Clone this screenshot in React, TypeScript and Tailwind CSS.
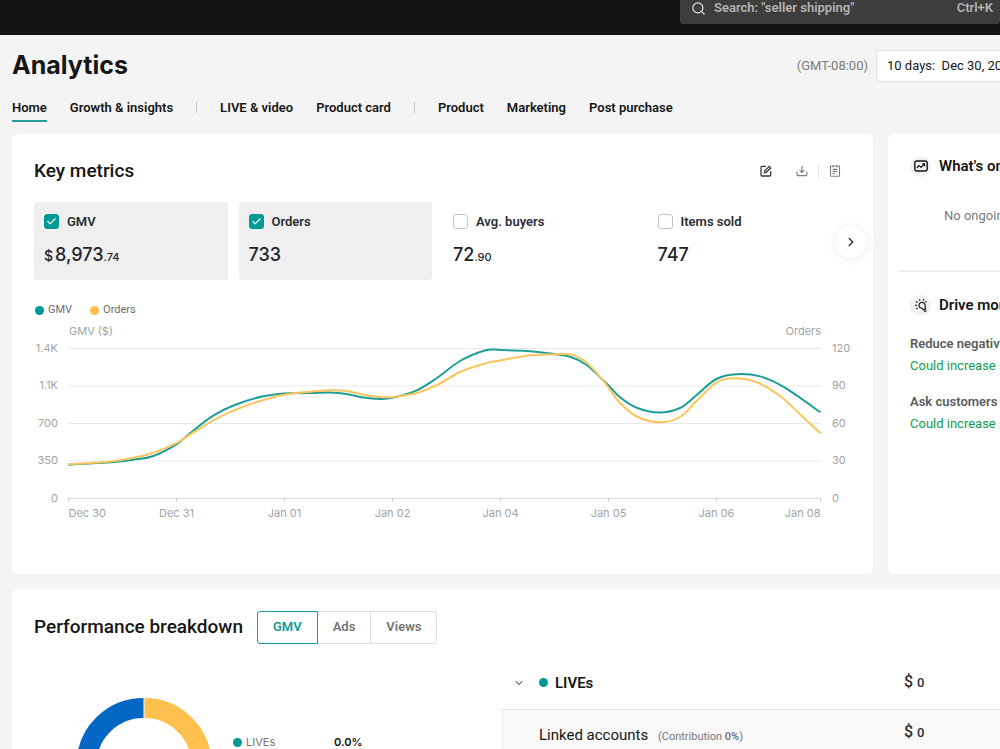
import { useState } from "react";
import { Check, ChevronDown, ChevronRight, Search } from "lucide-react";

type Point = [number, number];

const gmvPoints: Point[] = [
  [68.5, 464.7], [116.7, 461.7], [133.3, 459.7], [152.7, 456.3], [176, 444.7], [190, 433.3], [213.3, 415.7],
  [236.7, 404.3], [263.3, 396.3], [284.3, 393.5], [310, 393], [330, 392.5], [346.7, 393.9], [363.3, 397.5],
  [380, 398.9], [392.3, 397.9], [416.7, 390.3], [437, 378], [460, 361], [485.7, 350.2], [500, 350], [526.7, 350.9],
  [548, 353.3], [570, 356.7], [586.7, 365], [608.3, 385.3], [620, 397.3], [636.7, 407.7], [659, 412.5],
  [680, 408], [696.7, 395], [716.3, 379], [736.7, 374.2], [760, 376.4], [783.3, 386.7], [820.5, 412.3],
];

const orderPoints: Point[] = [
  [68.5, 464.3], [110, 461.4], [133.3, 457.7], [152.7, 453], [176, 443.3], [190, 434.7], [213.3, 420.3],
  [233.3, 410.7], [260, 401], [284.3, 394.7], [310, 391.7], [330, 390.3], [346.7, 390.9], [363.3, 394.7],
  [380, 397], [392.3, 397], [416.7, 393], [440, 383.5], [460, 372], [486.7, 363], [500, 360.5], [526.7, 355.7],
  [550, 354.5], [571, 354.5], [586.7, 362.7], [601.7, 378.7], [608.3, 387.5], [620, 403], [636.7, 416.5],
  [659, 422.3], [680, 417], [696.7, 400.8], [716.3, 382.6], [733.3, 378.3], [756.7, 382.2], [780, 396],
  [800, 414.3], [820.5, 433.3],
];

function smoothPath(points: Point[]) {
  let d = `M${points[0][0]} ${points[0][1]}`;
  for (let i = 0; i < points.length - 1; i++) {
    const p0 = points[Math.max(i - 1, 0)];
    const p1 = points[i];
    const p2 = points[i + 1];
    const p3 = points[Math.min(i + 2, points.length - 1)];
    d += ` C${p1[0] + (p2[0] - p0[0]) / 6} ${p1[1] + (p2[1] - p0[1]) / 6} ${p2[0] - (p3[0] - p1[0]) / 6} ${
      p2[1] - (p3[1] - p1[1]) / 6
    } ${p2[0]} ${p2[1]}`;
  }
  return d;
}

const gridRows = [
  { y: 348.5, left: "1.4K", right: "120" },
  { y: 386, left: "1.1K", right: "90" },
  { y: 423.5, left: "700", right: "60" },
  { y: 461, left: "350", right: "30" },
  { y: 498.5, left: "0", right: "0" },
];

const ticks = [
  { x: 68.5, label: "Dec 30", anchor: "start" },
  { x: 176.5, label: "Dec 31", anchor: "middle" },
  { x: 284.5, label: "Jan 01", anchor: "middle" },
  { x: 392.5, label: "Jan 02", anchor: "middle" },
  { x: 500.5, label: "Jan 04", anchor: "middle" },
  { x: 608.5, label: "Jan 05", anchor: "middle" },
  { x: 716.5, label: "Jan 06", anchor: "middle" },
  { x: 820.5, label: "Jan 08", anchor: "end" },
] as const;

function TrendChart() {
  return (
    <svg viewBox="34 320 817 206" className="block w-full" role="img" aria-label="GMV and orders by day">
      <g fontSize="11" fill="#a3a3a3">
        <text x="69" y="335">GMV ($)</text>
        <text x="821" y="335" textAnchor="end">Orders</text>
        {gridRows.map((row) => (
          <g key={row.y}>
            <line x1="68" x2="821" y1={row.y} y2={row.y} stroke={row.left === "0" ? "#dcdcdc" : "#e9e9e9"} />
            <text x="58" y={row.y + 3} textAnchor="end">{row.left}</text>
            <text x="832" y={row.y + 3}>{row.right}</text>
          </g>
        ))}
        {ticks.map((tick) => (
          <g key={tick.label}>
            <line x1={tick.x} x2={tick.x} y1="498" y2="502" stroke="#cfcfcf" />
            <text x={tick.x} y="517" textAnchor={tick.anchor}>{tick.label}</text>
          </g>
        ))}
      </g>
      <path d={smoothPath(gmvPoints)} fill="none" stroke="#1f9d97" strokeWidth="2" strokeLinejoin="round" />
      <path d={smoothPath(orderPoints)} fill="none" stroke="#fbc55c" strokeWidth="2" strokeLinejoin="round" />
    </svg>
  );
}

function EditIcon() {
  return (
    <svg viewBox="0 0 12 12" className="size-3" fill="none" stroke="currentColor" strokeWidth="1.3">
      <path d="M6 1.3H2Q1 1.3 1 2.3V10Q1 11 2 11H9.7Q10.7 11 10.7 10V6.3" />
      <path d="M4.5 7.6 4.8 5.8 9.2 1.4 10.7 2.9 6.3 7.3Z" />
    </svg>
  );
}

function DownloadIcon() {
  return (
    <svg viewBox="0 0 12 12" className="size-3" fill="none" stroke="currentColor" strokeWidth="1.1">
      <path d="M6 .8V7.4M3.6 5.2 6 7.5 8.4 5.2M1 6.6V9.6Q1 10.6 2 10.6H10Q11 10.6 11 9.6V6.6" />
    </svg>
  );
}

function ReportIcon() {
  return (
    <svg viewBox="0 0 12 12" className="size-3" fill="none" stroke="currentColor" strokeWidth="1.1">
      <rect x="1.5" y="1" width="9" height="10.2" rx=".8" />
      <path d="M4 .6V2.4M8 .6V2.4M3.6 4.4H8.4M3.6 6.4H8.4M3.6 8.5H6.2" />
    </svg>
  );
}

function TrendIcon() {
  return (
    <svg viewBox="0 0 14 12" className="h-3 w-3.5" fill="none" stroke="currentColor" strokeWidth="1.4">
      <rect x=".8" y="1" width="12.4" height="10" rx="2" />
      <path d="M2.8 8 5 5.6 7 7.4 10.4 4M8.2 3.9H10.6V6.2" strokeWidth="1.2" />
    </svg>
  );
}

function BulbIcon() {
  return (
    <svg viewBox="0 0 14 14" className="size-3.5" fill="none" stroke="currentColor" strokeWidth="1.2">
      <path d="M5.4 9.2C4 6.6 6 4 8.6 4.4 11 4.8 11.7 7.2 11 9.2L11.6 11.2 9.4 11.8 8.4 10.4Z" />
      <path d="M1 7.4H2.8M2 3.4 3.6 4.6M5.4 1.2 6 2.8M10 1 9.4 2.6M12.6 3.2 11.4 4.2M2.2 11 3.6 10.2M10 13.4 12.4 12.8" />
    </svg>
  );
}

const tabs = ["Home", "Growth & insights", "|", "LIVE & video", "Product card", "|", "Product", "Marketing", "Post purchase"];

const metrics = [
  { name: "GMV", prefix: "$", whole: "8,973", fraction: ".74", on: true },
  { name: "Orders", prefix: "", whole: "733", fraction: "", on: true },
  { name: "Avg. buyers", prefix: "", whole: "72", fraction: ".90", on: false },
  { name: "Items sold", prefix: "", whole: "747", fraction: "", on: false },
];

function MetricTile({ metric }: { metric: (typeof metrics)[number] }) {
  const [on, setOn] = useState(metric.on);
  return (
    <div className={`h-[78px] rounded-[3px] px-2.5 pt-[11px] ${on ? "bg-[#efefef]" : "bg-white"}`}>
      <label className="flex h-[17px] items-center gap-2 font-['Roboto',sans-serif] text-[13px] font-semibold text-[#2b2d35]">
        <span className="relative flex size-[15px] shrink-0">
          <input
            type="checkbox"
            checked={on}
            onChange={() => setOn(!on)}
            className="size-[15px] appearance-none rounded-[3px] border border-[#c4c4c4] bg-white checked:border-[#009995] checked:bg-[#009995]"
          />
          {on && <Check className="pointer-events-none absolute inset-0 m-auto size-[11px] text-white" strokeWidth={2.5} />}
        </span>
        {metric.name}
      </label>
      <div className="mt-[13px] flex items-baseline text-[18px] leading-6 font-medium text-[#22242c]">
        {metric.prefix && <span className="mr-0.5 text-sm">{metric.prefix}</span>}
        {metric.whole}
        {metric.fraction && <span className="text-[11px] font-medium">{metric.fraction}</span>}
      </div>
    </div>
  );
}

function Advice({ title }: { title: string }) {
  return (
    <div className="text-[13px] leading-[22px]">
      <h3 className="font-semibold text-[#5c5c5c]">{title}</h3>
      <a href="#sales" className="block text-[#0f9d4f]">Could increase sales</a>
    </div>
  );
}

export default function App() {
  const [view, setView] = useState("GMV");
  return (
    <div className="h-screen overflow-hidden bg-[#f4f4f4] font-['Inter',sans-serif] whitespace-nowrap text-[#161616]">
      <header className="flex h-[35px] items-end justify-end bg-[#121212] pb-[11px]">
        <label className="flex h-8 w-80 shrink-0 items-center gap-2 rounded-[3px] bg-[#3d3d3d] px-[11px] font-['Roboto',sans-serif] text-[13px] font-semibold text-[#b3b3b3]">
          <Search className="size-[15px] shrink-0 text-[#e5e5e5]" />
          <input
            type="search"
            aria-label="Search"
            placeholder={'Search: "seller shipping"'}
            className="min-w-0 flex-1 bg-transparent outline-none placeholder:text-[#b3b3b3]"
          />
          <kbd className="-mr-1 font-['Roboto',sans-serif]">Ctrl+K</kbd>
        </label>
      </header>

      <main className="pl-3">
        <div className="flex h-[61px] items-center justify-between">
          <h1 className="text-[25px] font-bold">Analytics</h1>
          <div className="flex items-center gap-2">
            <span className="font-['Roboto',sans-serif] text-[13px] text-[#7a7a7a]">(GMT-08:00)</span>
            <button type="button" className="h-8 w-[124px] overflow-hidden rounded-l-[3px] border border-r-0 border-[#e0e0e0] bg-white pl-2.5 text-left font-['Roboto',sans-serif] text-[13px] whitespace-pre">
              10 days:  Dec 30, 2024
            </button>
          </div>
        </div>

        <nav className="flex h-[26px] gap-[23px] font-['Roboto',sans-serif] text-[13px] font-semibold">
          {tabs.map((tab, i) =>
            tab === "|" ? (
              <span key={i} className="mt-1.5 h-[11px] w-px bg-[#c9c9c9]" />
            ) : (
              <a key={tab} href="#tab" className={`pt-0.5 leading-5 ${i === 0 ? "border-b-2 border-[#2a9a9c]" : ""}`}>
                {tab}
              </a>
            ),
          )}
        </nav>

        <div className="mt-3 flex gap-[15px]">
          <section className="relative h-[440px] min-w-0 flex-1 rounded-md bg-white px-[22px] pt-[23px]">
            <div className="flex h-7 items-center justify-between">
              <h2 className="font-['Roboto',sans-serif] text-[19px] font-medium">Key metrics</h2>
              <div className="mr-2.5 flex items-center text-[#7d7d7d]">
                <button type="button" aria-label="Edit" className="mr-6 text-[#3a3a3a]"><EditIcon /></button>
                <button type="button" aria-label="Download"><DownloadIcon /></button>
                <span className="mx-2.5 h-3.5 w-px bg-[#e4e4e4]" />
                <button type="button" aria-label="Report"><ReportIcon /></button>
              </div>
            </div>
            <div className="mt-[17px] mr-2.5 grid grid-cols-4 gap-[11px]">
              {metrics.map((metric) => <MetricTile key={metric.name} metric={metric} />)}
            </div>
            <button
              type="button"
              aria-label="Next metrics"
              className="absolute top-[92px] right-1.5 flex size-8 items-center justify-center rounded-full bg-white shadow-[0_1px_8px_rgba(0,0,0,0.08)]"
            >
              <ChevronRight className="size-3.5 text-[#333]" strokeWidth={2.5} />
            </button>
            <div className="mt-[21px] mb-px flex h-[18px] items-center gap-[18px] font-['Roboto',sans-serif] text-[11px] text-[#6e6e6e]">
              <span className="flex items-center gap-1"><i className="ml-px size-[9px] rounded-full bg-[#009995]" />GMV</span>
              <span className="flex items-center gap-1"><i className="size-[9px] rounded-full bg-[#fec04a]" />Orders</span>
            </div>
            <TrendChart />
          </section>

          <aside className="w-28 shrink-0 overflow-hidden rounded-l-md bg-white font-['Roboto',sans-serif]">
            <div className="ml-2.5 flex h-[138px] flex-col border-b-2 border-[#f0f0f0] pt-5">
              <h2 className="flex items-center gap-2 pl-3 text-[15px] leading-6 font-semibold">
                <span className="flex size-[21px] shrink-0 items-center justify-center rounded-full bg-[#f1f1f1]"><TrendIcon /></span>
                What's ongoing
              </h2>
              <p className="mt-7 pl-[46px] text-[13px] leading-5 text-[#7a7a7a]">No ongoing events</p>
            </div>
            <div className="pt-[21px] pl-[22px]">
              <h2 className="flex items-center gap-2 text-[15px] leading-6 font-semibold">
                <span className="flex size-[21px] shrink-0 items-center justify-center rounded-full bg-[#f1f1f1]"><BulbIcon /></span>
                Drive more sales
              </h2>
              <div className="mt-4 grid gap-3.5">
                <Advice title="Reduce negative reviews" />
                <Advice title="Ask customers to review" />
              </div>
            </div>
          </aside>
        </div>

        <section className="mt-[15px] rounded-l-md bg-white pt-[22px] pl-[22px]">
          <div className="flex h-8 items-center gap-3.5 font-['Roboto',sans-serif]">
            <h2 className="text-[19px] font-medium">Performance breakdown</h2>
            <div className="flex text-[13px] font-semibold text-[#757575]">
              {["GMV", "Ads", "Views"].map((name) => (
                <button
                  key={name}
                  type="button"
                  onClick={() => setView(name)}
                  className={`-ml-px h-[33px] border px-[15px] first:ml-0 first:rounded-l-[3px] last:rounded-r-[3px] ${
                    view === name ? "relative border-[#1f9c98] text-[#149994]" : "border-[#dedede]"
                  }`}
                >
                  {name}
                </button>
              ))}
            </div>
          </div>
          <div className="flex items-start">
            <div className="flex w-[467px] shrink-0 items-start gap-[22px] pt-[55px] pl-[43px]">
              <svg viewBox="0 0 134 134" className="size-[134px] shrink-0" fill="none" strokeWidth="20">
                <path d="M67.5 10A57 57 0 0 1 67.5 124" stroke="#ffc04d" />
                <path d="M66.5 124A57 57 0 0 1 66.5 10" stroke="#0467c3" />
              </svg>
              <div className="mt-9 flex h-4 items-center text-[11px]">
                <i className="mr-1 size-[9px] rounded-full bg-[#009995]" />
                <span className="w-[88px] text-[#777]">LIVEs</span>
                <strong className="font-semibold">0.0%</strong>
              </div>
            </div>
            <table className="mt-3.5 min-w-0 flex-1 table-fixed border-collapse text-left font-['Roboto',sans-serif]">
              <tbody>
                <tr className="h-[52px] border-b border-[#e6e6e6]">
                  <th className="w-[403px] p-0 pl-3 font-semibold">
                    <div className="flex items-center text-[15px]">
                      <button type="button" aria-label="Collapse LIVEs"><ChevronDown className="size-3" /></button>
                      <i className="mr-[7px] ml-3.5 size-[9px] rounded-full bg-[#009995]" />
                      LIVEs
                    </div>
                  </th>
                  <td className="p-0 pb-0.5 text-base font-medium text-[#2b2d35]">$ <span className="text-[13px]">0</span></td>
                </tr>
                <tr className="h-[52px] bg-[#f8f8f8]">
                  <th className="p-0 pl-[38px] text-[15px] font-normal">
                    Linked accounts <span className="ml-1.5 text-[11px] text-[#777]">(Contribution <b className="font-semibold">0%</b>)</span>
                  </th>
                  <td className="p-0 pb-1.5 text-base font-medium text-[#2b2d35]">$ <span className="text-[13px]">0</span></td>
                </tr>
              </tbody>
            </table>
          </div>
        </section>
      </main>
    </div>
  );
}
